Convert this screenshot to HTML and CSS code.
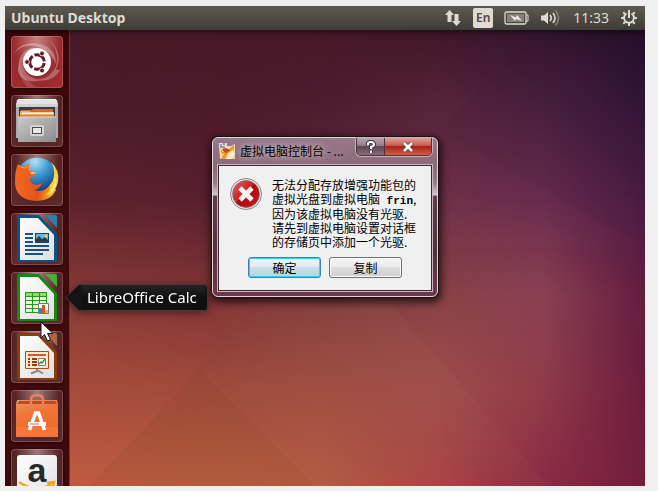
FILE: index.html
```html
<!DOCTYPE html>
<html lang="zh-CN">
<head>
<meta charset="utf-8">
<title>Ubuntu Desktop</title>
<link rel="stylesheet" href="styles.css">
</head>
<body>
<main class="desktop">
  <div class="wallpaper" aria-hidden="true">
    <i class="wash wash-1"></i><i class="wash wash-2"></i><i class="wash wash-3"></i>
    <i class="wash wash-4"></i><i class="wash wash-5"></i><i class="wash wash-6"></i>
    <svg class="facets" viewBox="0 0 640 480" preserveAspectRatio="none">
      <path d="M530 29 433 124 640 240V24z" fill="#100018" opacity=".03"/>
      <path d="M433 240H640V480H545L388 300z" fill="#300018" opacity=".03"/>
      <path d="M252 303 85 480H310L195 365z" fill="#403000" opacity=".06"/>
      <path d="M252 303 195 365 310 480H545L388 300z" fill="#806040" opacity=".04"/>
    </svg>
  </div>

  <header class="panel">
    <h1 class="panel-title">Ubuntu Desktop</h1>
    <div class="indicators">
      <svg class="net" width="18" height="18" viewBox="0 0 18 18"><path d="M5.500 1 10 6H7.500v7h-4V6H1zM12.500 17 8 12h2.500V5h4v7H17z" fill="#dfdbd2"/></svg>
      <span class="lang">En</span>
      <svg class="battery" width="25" height="14" viewBox="0 0 25 14"><rect x="1" y="1" width="21" height="12" rx="1.500" fill="none" stroke="#dfdbd2" stroke-width="1.300"/><rect x="3" y="3" width="17" height="8" fill="#85827a"/><path d="M22 4h2v6h-2" fill="none" stroke="#dfdbd2"/><path d="m6 4 6 2.500L13 4l5 6-6-2-1 2z" fill="#f0ece3"/></svg>
      <svg class="sound" width="22" height="18" viewBox="0 0 22 18"><path d="M1 6.500h3L8 3v12l-4-3.500H1z" fill="#dfdbd2"/><path d="M10 6q2.500 3 0 6M13 4q4 5 0 10" fill="none" stroke="#dfdbd2" stroke-width="1.600"/><path d="M15.500 1.500q6 7.500 0 15" fill="none" stroke="#89867e" stroke-width="1.500"/></svg>
      <time class="clock">11:33</time>
      <svg class="gear" width="18" height="18" viewBox="0 0 18 18"><g fill="none" stroke="#dfdbd2"><path d="M6.500 4.500a5 5 0 1 0 5 0" stroke-width="2"/><path d="M9 1v8" stroke-width="2"/><path d="M1 9h3M14 9h3M9 14v3M3.300 3.300 5 5M14.700 3.300 13 5M3.300 14.700 5 13M14.700 14.700 13 13" stroke-width="2"/></g></svg>
    </div>
  </header>

  <nav class="launcher" aria-label="Launcher">
    <button class="tile tile-dash" aria-label="Dash">
      <svg viewBox="0 0 52 52">
        <g fill="#fff"><path d="M2 18Q12 4 29 8q16 4 16 20-6-15-22-18Q11 8 2 18z" opacity=".3"/><path d="M7 36Q6 14 24 11 12 18 13 30t17 14Q12 49 7 36z" opacity=".28"/><path d="M50 33Q42 47 27 44q13-2 18-14 4-14-7-27 15 15 7 30 3 2 5 0z" opacity=".28"/><path d="M16 51Q6 40 8 25q3 19 18 26z" opacity=".14"/></g>
        <circle cx="26" cy="27" r="14.500" fill="#510b12" opacity=".35"/><circle cx="26" cy="26" r="14" fill="#fff"/>
        <circle cx="26" cy="26" r="7.300" fill="none" stroke="#651923" stroke-width="3" stroke-dasharray="13.300 2" stroke-dashoffset="-1"/>
        <g fill="#651923" stroke="#fff" stroke-width=".8"><circle cx="16" cy="26" r="2.400"/><circle cx="31" cy="17.500" r="2.400"/><circle cx="31" cy="34.500" r="2.400"/></g>
      </svg>
    </button>
    <button class="tile" aria-label="Files">
      <svg viewBox="0 0 52 52">
        <defs><linearGradient id="metal" x2="1" y2="1"><stop stop-color="#c8c8c8"/><stop offset="1" stop-color="#8b8b8b"/></linearGradient><linearGradient id="lid" x2="0" y2="1"><stop stop-color="#f5f5f5"/><stop offset="1" stop-color="#bdbdbd"/></linearGradient></defs>
        <path d="M7 4h38l2 7v32H5V11z" fill="url(#lid)"/><path d="M5 11h42v32H5z" fill="#ababab"/><path d="M6 5h40l1 5H5z" fill="#e4e4e4"/><path d="M5 9h42v3H5z" fill="#d0d0d0"/>
        <path d="M8 12h36v11H8z" fill="#3a3b3c"/><path d="M10 15h11l1-1h20v4H10z" fill="#d7663a"/><path d="M9 16h10v1h24v6H9z" fill="#efad55"/><path d="M11 17.500h31v1.500H11z" fill="#fff2dc"/><path d="M9 20h34v2H9z" fill="#e57e3e"/>
        <path d="M7 22h38v25H7z" fill="url(#metal)"/><path d="M7 22h38" stroke="#d9d9d9"/>
        <rect x="19" y="30" width="14" height="11" rx="2" fill="#d4d4d4"/><rect x="21.500" y="32.500" width="9" height="6" fill="#e8e8e8" stroke="#4c4c4c"/>
      </svg>
    </button>
    <button class="tile" aria-label="Firefox">
      <svg viewBox="0 0 52 52">
        <defs><radialGradient id="globe" cx=".45" cy=".1" r=".8"><stop stop-color="#b0e4fa"/><stop offset=".45" stop-color="#3a94cf"/><stop offset="1" stop-color="#092e6c"/></radialGradient><linearGradient id="fox" x1="0" y1=".3" x2="1" y2=".5"><stop stop-color="#ef6b20"/><stop offset=".65" stop-color="#e95319"/><stop offset="1" stop-color="#fbb822"/></linearGradient></defs>
        <circle cx="26" cy="24" r="20.500" fill="url(#globe)"/>
        <path d="M7 10q2 3 6 3 3-3 6-3-2 4 0 7 6 0 6 2-1 3-6 5 0 4 3 6 4 2 9-1-2 6-8 7 8 3 14-3l4-5 4 8q-5 11-19 11Q4 46 4 28q0-12 3-18z" fill="url(#fox)"/>
        <path d="M40 8q4 7 3 14-1 6-4 9 1 5-5 11 11-4 13-14 2-12-7-20z" fill="#f9d33a"/><path d="m43 20 1 8-3 8-4 6q8-6 8-15z" fill="#fff09a"/>
        <path d="M8 11q2 3 6 3 3-2 5-3-2 4 0 6" fill="none" stroke="#f6a13c"/><path d="M19 18q5-1 6 1-2 2-5 1z" fill="#f7c287"/>
      </svg>
    </button>
    <button class="tile" aria-label="LibreOffice Writer">
      <svg viewBox="0 0 52 52">
        <defs><linearGradient id="paper" x2="1" y2="1"><stop stop-color="#fff"/><stop offset="1" stop-color="#dedede"/></linearGradient></defs>
        <path d="M8 2h20l18 19v26q0 2-2 2H8q-2 0-2-2V4q0-2 2-2z" fill="#0c527e"/><path d="M34 2h10q2 0 2 2v11z" fill="#2f7eae"/><path d="M9 5h18l16 17v25H9z" fill="url(#paper)"/>
        <path d="M14 21h8M14 25h8M14 29h8M14 33h24M14 37h24M14 41h18" stroke="#16537e" stroke-width="2"/><rect x="24.500" y="20.500" width="13" height="9" fill="#67b6e4" stroke="#124669"/><path d="m25 29 0-3 3-3 3 3 3-2 3 3v2z" fill="#263f45"/><circle cx="35" cy="23" r="1.500" fill="#f6cd3f"/>
      </svg>
    </button>
    <button class="tile" aria-label="LibreOffice Calc">
      <svg viewBox="0 0 52 52">
        <path d="M8 2h20l18 19v26q0 2-2 2H8q-2 0-2-2V4q0-2 2-2z" fill="#188811"/><path d="M34 2h10q2 0 2 2v11z" fill="#43ad36"/><path d="M9 5h18l16 17v25H9z" fill="url(#paper)"/>
        <path d="M14 20h22v21H14" fill="#e6fadf"/><path d="M14 20h22v5H14" fill="#8ade6a"/><path d="M14.500 20.500h21v20h-21zM14 24.500h22M14 28.500h22M14 32.500h22M14 36.500h22M21.500 20v21M28.500 20v21" fill="none" stroke="#29931d"/>
        <path d="M27.500 31.500h10v10h-10z" fill="#fff" stroke="#777"/><path d="M28 36h3v5h-3z" fill="#238edb"/><path d="M31 33h3v8h-3z" fill="#dd541a"/><path d="M34 38h3v3h-3z" fill="#f2bd20"/>
      </svg>
    </button>
    <button class="tile" aria-label="LibreOffice Impress">
      <svg viewBox="0 0 52 52">
        <path d="M8 2h20l18 19v26q0 2-2 2H8q-2 0-2-2V4q0-2 2-2z" fill="#8c3b0d"/><path d="M34 2h10q2 0 2 2v11z" fill="#af6540"/><path d="M9 5h18l16 17v25H9z" fill="url(#paper)"/>
        <path d="M14.500 20.500h23v17h-23z" fill="#ffe7d2" stroke="#ae4a16"/><path d="M17 24h18" stroke="#cc6024" stroke-width="2"/><path d="M17 28h2m2 0h5M17 31h2m2 0h5M17 34h2m2 0h5" stroke="#963c0a" stroke-width="2"/><path d="M27.500 27.500h7v7h-7z" fill="#fff" stroke="#77837d"/><path d="m28 33 2-2 1 1 3-4" fill="none" stroke="#27953b" stroke-width="1.400"/><path d="M26 38v2l-6 2.500M26 39l6 3.500" fill="none" stroke="#8a8782" stroke-width="2"/>
      </svg>
    </button>
    <button class="tile" aria-label="Ubuntu Software Center">
      <svg viewBox="0 0 52 52">
        <defs><linearGradient id="bag" x2=".3" y2="1"><stop stop-color="#e49a65"/><stop offset=".4" stop-color="#ef7638"/><stop offset="1" stop-color="#ef692b"/></linearGradient></defs>
        <path d="M6 10h40l1 4v33H5V14z" fill="url(#bag)"/><path d="M8 11h36l2 3H6z" fill="#b94c27"/><path d="M20 18V10q0-5 6-5t6 5v8" fill="none" stroke="#ed805a" stroke-width="2.500"/><path d="M5 37h42v10H5z" fill="#ff8a50" opacity=".4"/>
        <path d="M18.500 40 24.500 23h3l6 17" fill="none" stroke="#fff" stroke-width="3.500"/><path d="M17 32h18v4H17z" fill="#fff"/><path d="M19 34h9" stroke="#ef6b2e"/>
      </svg>
    </button>
    <button class="tile" aria-label="Amazon">
      <svg viewBox="0 0 52 52">
        <rect x="6" y="6" width="40" height="44" rx="3" fill="url(#paper)"/><text class="amazon-letter" x="26" y="33" text-anchor="middle">a</text><path d="M8 33q17 12 32 2" fill="none" stroke="#f6a321" stroke-width="2.500"/><path d="m36 34 7-1-2 7" fill="none" stroke="#f6a321" stroke-width="2.500"/>
      </svg>
    </button>
  </nav>

  <div class="tooltip" role="tooltip">
    <svg class="tooltip-arrow" width="16" height="27" viewBox="0 0 16 27"><path d="M16 .5h-2L.7 13.500 14 26.500h2" fill="#141414" stroke="#4b3535"/></svg>
    <span class="tooltip-text">LibreOffice Calc</span>
  </div>

  <section class="dialog" role="alertdialog" aria-labelledby="dialog-title" aria-describedby="dialog-message">
    <header class="titlebar">
      <svg class="app-icon" width="16" height="16" viewBox="0 0 16 16"><path d="M0 3h12l4-2v15H1z" fill="#f1d7a2"/><path d="M0 0h8v5H0z" fill="#ddd"/><path d="M1 2h2m1-1h2M1 4h5" stroke="#555"/><path d="M2 7q4 4 6 1l7-6v4l-6 4-3 6H2l3-5q-4-1-3-4z" fill="#ee962b"/><path d="m3 6 4-1 4 2-3 3q-3 0-5-4z" fill="#d54525"/><path d="m9 12 5-4 2 3-4 5H8z" fill="#fff0c5"/></svg>
      <h2 class="dialog-title" id="dialog-title">虚拟电脑控制台 - ...</h2>
      <div class="window-buttons">
        <button class="window-button help" aria-label="Help"><svg width="12" height="14" viewBox="0 0 12 14"><g fill="none"><path d="M3 5V3.500Q3 2 6 2t3 2.500Q9 6 6 7v2m0 1v3" stroke="#3e3440" stroke-width="4"/><path d="M3 5V3.500Q3 2 6 2t3 2.500Q9 6 6 7v2m0 1.500V13" stroke="#fff" stroke-width="2"/></g></svg></button>
        <button class="window-button close" aria-label="Close"><svg width="14" height="12" viewBox="0 0 14 12"><path d="m3 2 8 8m0-8-8 8" stroke="#5b3039" stroke-width="4.500"/><path d="m3 2 8 8m0-8-8 8" stroke="#fff" stroke-width="2.700"/></svg></button>
      </div>
    </header>
    <div class="dialog-body">
      <div class="message-row">
        <svg class="error-icon" width="32" height="32" viewBox="0 0 32 32"><defs><linearGradient id="error" x2="1" y2="1"><stop stop-color="#e36b68"/><stop offset=".45" stop-color="#c91d20"/><stop offset=".5" stop-color="#ad070c"/><stop offset="1" stop-color="#d41b20"/></linearGradient></defs><circle cx="16" cy="16" r="15.500" fill="#e9eded" stroke="#83898a"/><circle cx="16" cy="16" r="13.500" fill="url(#error)" stroke="#7f7172" stroke-width=".7"/><path d="m10 10 12 12m0-12L10 22" stroke="#f6f4f3" stroke-width="4.800"/></svg>
        <p class="message" id="dialog-message">无法分配存放增强功能包的<br>虚拟光盘到虚拟电脑<b> frin</b>,<br>因为该虚拟电脑没有光驱.<br>请先到虚拟电脑设置对话框<br>的存储页中添加一个光驱.</p>
      </div>
      <div class="actions"><button class="action primary">确定</button><button class="action">复制</button></div>
    </div>
  </section>

  <svg class="cursor" width="14" height="21" viewBox="0 0 14 21" aria-hidden="true"><path d="M1 1v16l3.500-3.500L7.500 20l3-1.500-3-6H13z" fill="#fff" stroke="#111"/></svg>
</main>
</body>
</html>
```
FILE: styles.css
```css
* { box-sizing: border-box; }
body {
  margin: 0;
  height: 100vh;
  display: flex;
  padding: 6px 13px 5px 5px;
  background: #f0f0f0;
  font-family: "Noto Sans", "Noto Sans CJK SC", sans-serif;
}
h1, h2, p { margin: 0; }
button { font: inherit; padding: 0; border: 0; }
svg { display: block; flex: none; }

.desktop {
  position: relative;
  flex: 1;
  display: flex;
  flex-direction: column;
  overflow: hidden;
  isolation: isolate;
}

/* Wallpaper: vertical washes blended from left to right */
.wallpaper, .wash, .facets { position: absolute; inset: 0; }
.wallpaper { z-index: -1; }
.facets { width: 100%; height: 100%; }
.wash-1 { background: linear-gradient(#4a1a29 5%, #4c1a28 20%, #5c222c 40%, #883a37 60%, #a84c3a 80%, #bf5b40); }
.wash-2 { background: linear-gradient(#491928 5%, #4c1a29 20%, #571f2d 40%, #813537 60%, #a04b3c 80%, #b95f40); mask-image: linear-gradient(90deg, transparent 10%, #000 33%); }
.wash-3 { background: linear-gradient(#471829 5%, #4e1c2f 20%, #60293c 40%, #853e40 60%, #a24f42 80%, #b65b43); mask-image: linear-gradient(90deg, transparent 33%, #000 50%); }
.wash-4 { background: linear-gradient(#3f1629 5%, #56233a 20%, #6e3048 40%, #8c4548 60%, #a24f4c 80%, #ac4345); mask-image: linear-gradient(90deg, transparent 50%, #000 68%); }
.wash-5 { background: linear-gradient(#34152f 5%, #48203e 20%, #682b4e 40%, #8e4354 60%, #933e4a 80%, #8e2c46); mask-image: linear-gradient(90deg, transparent 68%, #000 84%); }
.wash-6 { background: linear-gradient(#26102a 5%, #301538 20%, #4a1c44 40%, #651e42 60%, #6e1d40 80%, #731f3e); mask-image: linear-gradient(90deg, transparent 84%, #000 100%); }

.panel {
  flex: none;
  height: 24px;
  padding: 0 7px 0 6px;
  display: flex;
  align-items: center;
  justify-content: space-between;
  color: #dfdbd2;
  background: linear-gradient(#5d5a50, #3d3c37);
  box-shadow: 0 1px 6px rgba(0, 0, 0, .7);
  z-index: 1;
}
.panel-title { font-size: 14px; font-weight: 700; line-height: 24px; }
.indicators { display: flex; align-items: center; gap: 11px; }
.lang {
  width: 20px;
  border-radius: 2px;
  background: #dfdbd2;
  color: #4a4943;
  font-size: 12px;
  font-weight: 600;
  line-height: 20px;
  text-align: center;
}
.clock { font-size: 14px; line-height: 24px; }

.launcher {
  flex: 1;
  align-self: flex-start;
  min-height: 0;
  display: flex;
  flex-direction: column;
  gap: 7px;
  padding: 6px;
  border-right: 1px solid rgba(255, 255, 255, .2);
  background: linear-gradient(#3c0709, #420c0e 60%, #3c090c);
}
.tile {
  flex: none;
  width: 52px;
  height: 52px;
  border-radius: 4px;
  background: radial-gradient(ellipse at 50% 0, rgba(255, 235, 235, .5), rgba(255, 220, 220, .12) 60%, rgba(255, 220, 220, .16));
  box-shadow: inset 0 0 0 1px rgba(255, 210, 210, .22), 0 1px 3px rgba(0, 0, 0, .4);
}
.tile-dash { background: radial-gradient(ellipse at 50% 0, #c88585, #98282c 65%, #a32f33); }
.amazon-letter { font: 700 34px "Liberation Sans", sans-serif; fill: #292929; }

.tooltip {
  position: absolute;
  left: 60px;
  top: 278px;
  display: flex;
  filter: drop-shadow(0 2px 4px rgba(0, 0, 0, .45));
}
.tooltip-text {
  padding: 0 10px 0 6px;
  border: 1px solid #4b3535;
  border-left: 0;
  border-radius: 0 4px 4px 0;
  background: linear-gradient(#242424, #101010 50%);
  color: #fff;
  font-size: 15px;
  line-height: 25px;
  white-space: nowrap;
}

.dialog {
  position: absolute;
  left: 207px;
  top: 131px;
  width: 226px;
  padding: 0 5px 5px;
  border: 1px solid #e2d5da;
  border-radius: 6px;
  background: linear-gradient(#97798a, #8b6978 18%, #987987 28%, #d4c5cc 36%, #65394a 37%, #57303d 70%, #713747);
  box-shadow: 0 0 0 1px #1c1015, 1px 3px 9px 2px rgba(0, 0, 0, .75);
  font-family: "Noto Sans CJK SC", sans-serif;
  font-size: 12px;
  color: #000;
}
.titlebar { display: flex; height: 27px; gap: 5px; padding-left: 1px; }
.app-icon { margin-top: 5px; }
.dialog-title {
  flex: 1;
  font-size: 12px;
  font-weight: 400;
  line-height: 26px;
  white-space: nowrap;
  text-shadow: 0 0 6px #cbb8c1, 0 0 8px #cbb8c1;
}
.window-buttons {
  display: flex;
  height: 18px;
  border: 1px solid #463540;
  border-top: 0;
  border-radius: 0 0 5px 5px;
  box-shadow: 0 0 0 1px #c7b3bc;
  overflow: hidden;
}
.window-button { display: grid; place-items: center; }
.help { width: 27px; background: linear-gradient(#baa4b1, #947a89 45%, #604655 50%, #8a6b7d); }
.close { width: 47px; border-left: 1px solid #54313b; background: linear-gradient(#e3a198, #c65a4d 45%, #a82317 50%, #d85c43); }
.dialog-body {
  display: flex;
  flex-direction: column;
  gap: 8px;
  padding: 12px 11px;
  border: 1px solid #382930;
  box-shadow: 0 0 0 1px #c9b8bf;
  background: #f0f0f0;
}
.message-row { display: flex; gap: 10px; }
.message { line-height: 14px; white-space: nowrap; }
.message b { font: 700 11px/12px "Liberation Mono", monospace; }
.actions { display: flex; justify-content: center; gap: 8px; }
.action {
  width: 73px;
  height: 21px;
  border: 1px solid #707070;
  border-radius: 3px;
  background: linear-gradient(#f3f3f3, #ebebeb 50%, #dddddd 50%, #cfcfcf);
  box-shadow: inset 0 0 0 1px #fafafa;
  line-height: 18px;
  color: #000;
}
.primary {
  border-color: #3c7fb1;
  background: linear-gradient(#eef5f8, #dfeaf0 50%, #c8dde8 50%, #bcd5e3);
  box-shadow: inset 0 0 0 1px #35d0fa;
}

.cursor { position: absolute; left: 35px; top: 315px; }
```
